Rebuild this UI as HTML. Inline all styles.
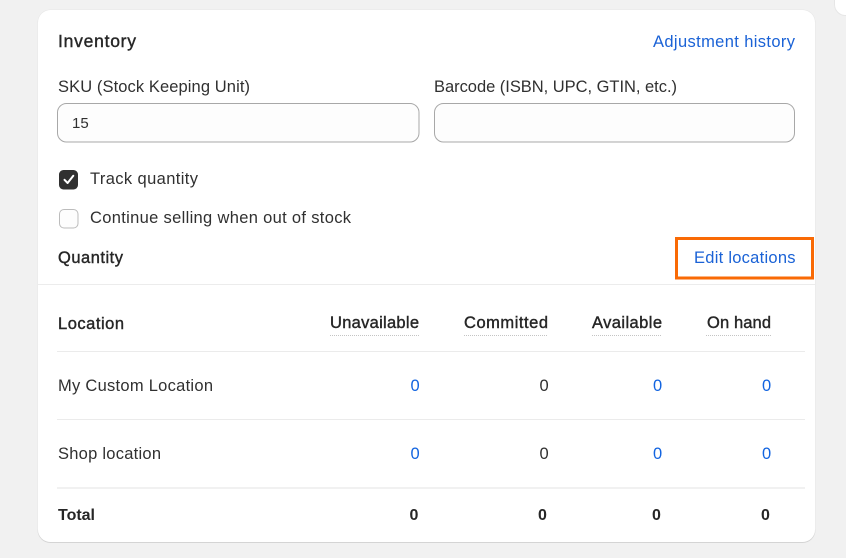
<!DOCTYPE html>
<html lang="en">
<head>
<meta charset="utf-8">
<title>Inventory</title>
<style>
html,body{margin:0;padding:0;background:#f1f1f1;width:846px;height:558px;overflow:hidden}
svg{display:block}
text{font-family:"Liberation Sans",sans-serif;font-size:16.5px;fill:#303030}
.b{fill:#262626;stroke:#262626;stroke-width:.4px}
.t{font-weight:bold;font-size:16px;fill:#262626}
.l{fill:#1a62d6}
.z{fill:#1264e0}
</style>
</head>
<body>
<svg width="846" height="558" viewBox="0 0 846 558" xmlns="http://www.w3.org/2000/svg">
<rect width="846" height="558" fill="#f1f1f1"/>
<!-- neighbouring card corner -->
<path d="M834 0H846V15.500H845A11 11 0 0 1 834 4.500Z" fill="#fff"/>
<path d="M834.500 0V4.500A11 11 0 0 0 845 15.500H846" fill="none" stroke="#e6e6e6"/>
<!-- card -->
<rect x="37.500" y="11" width="778" height="532" rx="13" fill="#d4d4d4"/>
<rect x="37.500" y="9.500" width="778" height="532.500" rx="13" fill="#e6e6e6"/>
<rect x="38" y="10" width="777" height="532" rx="12.500" fill="#fff"/>

<!-- header -->
<text class="b" x="58" y="47" textLength="78" style="font-size:17.5px">Inventory</text>
<text class="l" x="653" y="47" textLength="142">Adjustment history</text>

<!-- fields -->
<text x="58" y="92" textLength="192">SKU (Stock Keeping Unit)</text>
<text x="434" y="92" textLength="243">Barcode (ISBN, UPC, GTIN, etc.)</text>
<rect x="57.500" y="103.500" width="361.500" height="38.500" rx="9" fill="#fdfdfd" stroke="#a8a8a8"/>
<rect x="434.500" y="103.500" width="360" height="38.500" rx="9" fill="#fdfdfd" stroke="#a8a8a8"/>
<text x="72" y="128" style="font-size:15px">15</text>

<!-- checkboxes -->
<rect x="59" y="170" width="19" height="19.500" rx="4.500" fill="#303030"/>
<path d="M64.500 179.800L67.600 183L73.300 175.800" fill="none" stroke="#fff" stroke-width="2" stroke-linecap="round" stroke-linejoin="round"/>
<text x="90" y="184" textLength="108">Track quantity</text>
<rect x="59.500" y="209.500" width="18.500" height="18.500" rx="4.500" fill="#fdfdfd" stroke="#bcbcbc"/>
<text x="90" y="223" textLength="261">Continue selling when out of stock</text>

<!-- quantity -->
<text class="b" x="58" y="263" textLength="65">Quantity</text>
<text class="l" x="694" y="263" textLength="101.500">Edit locations</text>
<rect x="676.500" y="238.500" width="136" height="39.500" fill="none" stroke="#f96a05" stroke-width="3"/>
<rect x="38" y="284" width="777" height="1" fill="#ececec"/>

<!-- table header -->
<text class="b" x="58" y="329" textLength="66">Location</text>
<text class="b" x="330" y="328" textLength="89">Unavailable</text>
<text class="b" x="464" y="328" textLength="84">Committed</text>
<text class="b" x="592" y="328" textLength="70">Available</text>
<text class="b" x="707" y="328" textLength="64">On hand</text>
<g stroke="#c4c4c4" stroke-width="1" stroke-dasharray="1 1">
<path d="M330 335.500H420"/>
<path d="M464 335.500H548"/>
<path d="M592 335.500H662"/>
<path d="M706 335.500H771"/>
</g>
<rect x="57" y="351" width="748" height="1" fill="#ebebeb"/>

<!-- rows -->
<text x="58" y="391" textLength="155">My Custom Location</text>
<text class="z" x="410.500" y="391" textLength="9">0</text>
<text x="539.500" y="391" textLength="9">0</text>
<text class="z" x="653" y="391" textLength="9">0</text>
<text class="z" x="762" y="391" textLength="9">0</text>
<rect x="57" y="419" width="748" height="1" fill="#ebebeb"/>

<text x="58" y="459" textLength="103">Shop location</text>
<text class="z" x="410.500" y="459" textLength="9">0</text>
<text x="539.500" y="459" textLength="9">0</text>
<text class="z" x="653" y="459" textLength="9">0</text>
<text class="z" x="762" y="459" textLength="9">0</text>
<rect x="57" y="487" width="748" height="2" fill="#f1f1f1"/>

<text class="t" x="58" y="520" textLength="37">Total</text>
<text class="t" x="409.500" y="520" textLength="9.500">0</text>
<text class="t" x="538" y="520" textLength="9.500">0</text>
<text class="t" x="652" y="520" textLength="9.500">0</text>
<text class="t" x="761" y="520" textLength="9.500">0</text>
</svg>
</body>
</html>
